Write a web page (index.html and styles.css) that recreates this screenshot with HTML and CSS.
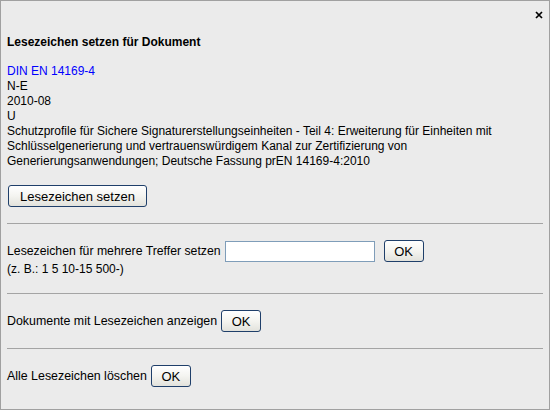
FILE: index.html
```html
<!DOCTYPE html>
<html lang="de">
<head>
<meta charset="utf-8">
<title>Lesezeichen</title>
<link rel="stylesheet" href="styles.css">
</head>
<body>
<div class="dialog">
  <div class="header">
    <svg class="close" width="8" height="8" viewBox="0 0 8 8" aria-label="schließen">
      <path d="M1 1 L7 7 M7 1 L1 7" stroke="#000" stroke-width="1.7" fill="none"/>
    </svg>
  </div>
  <div class="title">Lesezeichen setzen für Dokument</div>
  <div class="doc">
    <a class="doclink" href="#">DIN EN 14169-4</a>
    <div>N-E</div>
    <div>2010-08</div>
    <div>U</div>
    <div>Schutzprofile für Sichere Signaturerstellungseinheiten - Teil 4: Erweiterung für Einheiten mit Schlüsselgenerierung und vertrauenswürdigem Kanal zur Zertifizierung von Generierungsanwendungen; Deutsche Fassung prEN 14169-4:2010</div>
  </div>
  <div class="btnrow"><button class="btn">Lesezeichen setzen</button></div>
  <hr class="sep">
  <div class="row">
    <span class="label label-tight">Lesezeichen für mehrere Treffer setzen</span>
    <input class="field" type="text">
    <button class="btn ok wide-gap">OK</button>
  </div>
  <div class="hint">(z. B.: 1 5 10-15 500-)</div>
  <hr class="sep">
  <div class="row">
    <span class="label">Dokumente mit Lesezeichen anzeigen</span>
    <button class="btn ok">OK</button>
  </div>
  <hr class="sep">
  <div class="row">
    <span class="label">Alle Lesezeichen löschen</span>
    <button class="btn ok">OK</button>
  </div>
</div>
</body>
</html>
```
FILE: styles.css
```css
html, body {
  margin: 0;
  padding: 0;
  background: #ebebeb;
}
body {
  font-family: "Liberation Sans", Arial, sans-serif;
  font-size: 12px;
  line-height: 15px;
  color: #000;
}
.dialog {
  box-sizing: border-box;
  width: 550px;
  height: 410px;
  border: 1px solid #a0a0a0;
  background: #ebebeb;
  padding: 0 6px;
}
.header {
  box-sizing: border-box;
  height: 34px;
  display: flex;
  justify-content: flex-end;
  align-items: flex-start;
  padding-top: 10px;
}
.close {
  display: block;
}
.title {
  font-weight: bold;
  height: 15px;
}
.doc {
  margin-top: 14px;
}
.doclink {
  display: block;
  color: #0000ff;
  text-decoration: none;
}
.btnrow {
  margin-top: 16px;
  display: flex;
  padding-left: 1px;
}
.btn {
  box-sizing: border-box;
  height: 22px;
  padding: 0 11px;
  margin: 0;
  font-family: "Liberation Sans", Arial, sans-serif;
  font-size: 13px;
  color: #000;
  border: 1px solid #1f3f6a;
  border-radius: 3px;
  background: linear-gradient(#ffffff, #f4f4f0 50%, #e2e2dc);
}
.ok {
  width: 40px;
  padding: 0;
}
.sep {
  border: 0;
  border-top: 1px solid #a4a4a4;
  height: 0;
  margin: 16px 0;
}
.row {
  display: flex;
  align-items: center;
  height: 22px;
  gap: 4px;
}
.label {
  font-size: 12.4px;
}
.label-tight {
  font-size: 12.25px;
}
.field {
  box-sizing: border-box;
  width: 150px;
  height: 21px;
  margin: 0;
  border: 1px solid #7f9db9;
  background: #fff;
  padding: 0 2px;
}
.wide-gap {
  margin-left: 5px;
}
.hint {
  height: 15px;
}
```
